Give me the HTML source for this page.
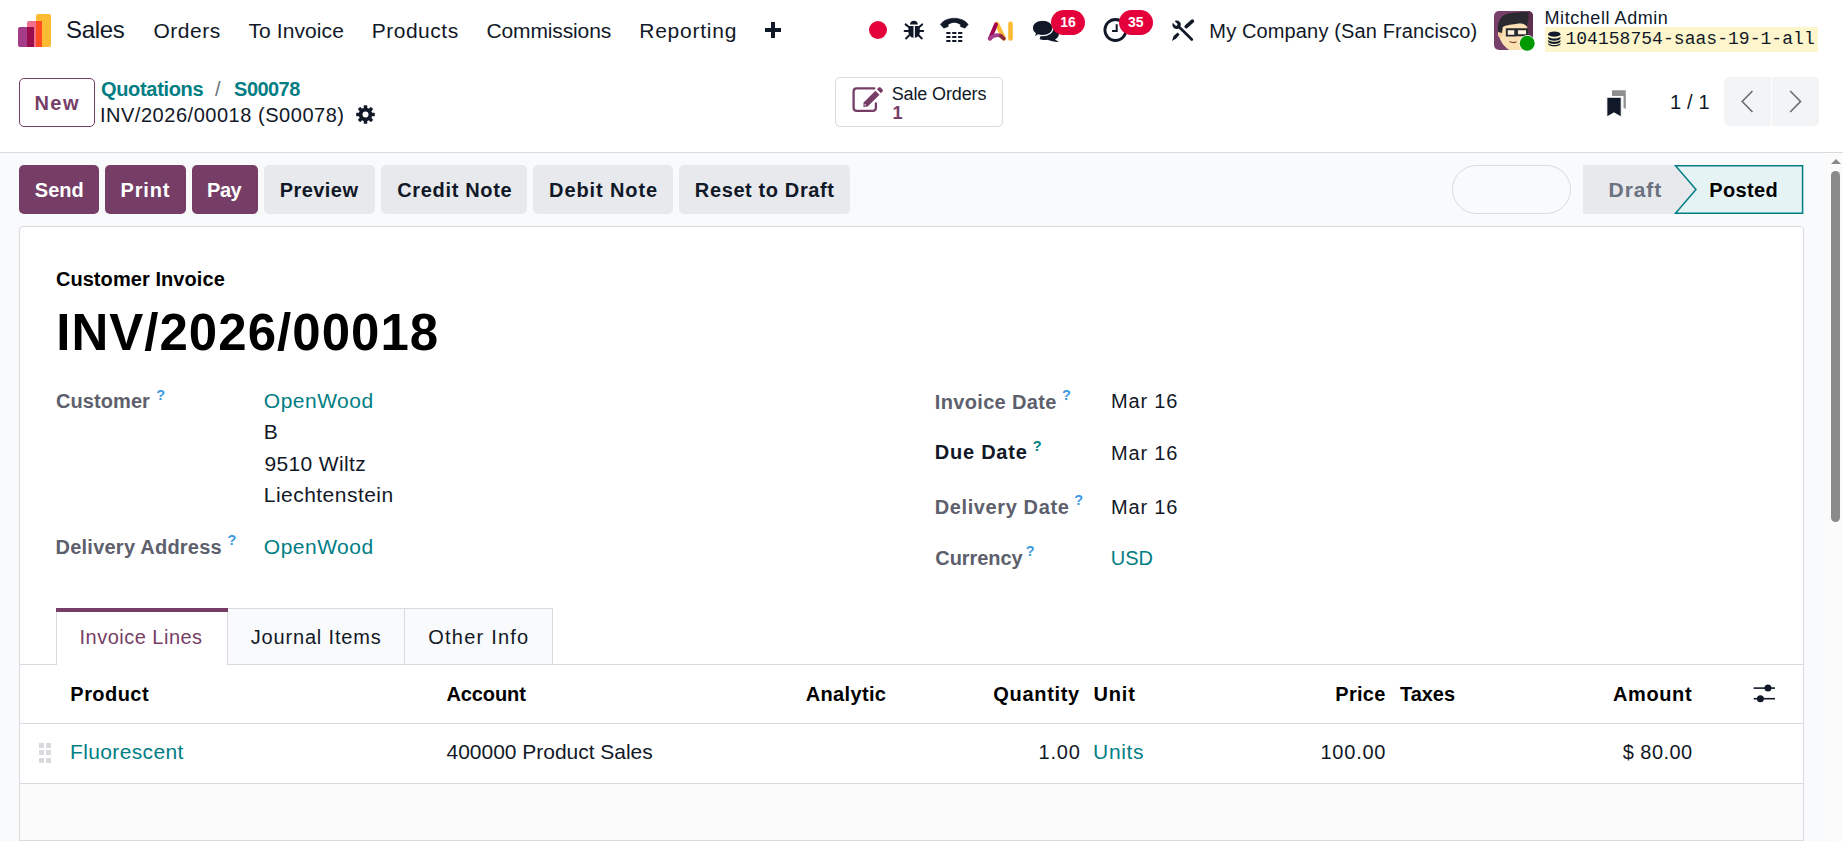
<!DOCTYPE html>
<html><head><meta charset="utf-8"><title>INV/2026/00018</title>
<style>
html,body{margin:0;padding:0;}
body{width:1843px;height:841px;overflow:hidden;position:relative;background:#fff;font-family:"Liberation Sans",sans-serif;}
.t{position:absolute;white-space:pre;}
.r{position:absolute;}
</style></head><body>
<div class="r" style="left:0px;top:0px;width:1843px;height:152px;background:#fff;"></div>
<div class="r" style="left:0px;top:152px;width:1843px;height:1px;background:#D8DADD;"></div>
<div class="r" style="left:0px;top:153px;width:1843px;height:688px;background:#F9FAFB;"></div>
<div class="r" style="left:19px;top:226px;width:1785px;height:700px;background:#fff;border:1px solid #D8DADD;border-radius:4px;box-sizing:border-box;"></div>
<svg class="r" style="left:18px;top:14px" width="34" height="34" viewBox="0 0 34 34">
<rect x="18" y="0" width="15" height="33" rx="2" fill="#FDBB33"/>
<rect x="9" y="7" width="15" height="26" rx="2" fill="#F06F8D"/>
<rect x="18" y="7" width="6" height="26" fill="#FF4B22"/>
<rect x="0" y="13" width="16" height="20" rx="2" fill="#A43C8A"/>
<rect x="9" y="13" width="7" height="20" fill="#9B0E4E"/>
</svg>
<span class="t" style="left:65.91px;top:18.38px;font-size:24px;line-height:24px;color:#111827;font-weight:400;font-family:'Liberation Sans', sans-serif;letter-spacing:-0.270px;">Sales</span>
<span class="t" style="left:153.41px;top:20.22px;font-size:21px;line-height:21px;color:#111827;font-weight:400;font-family:'Liberation Sans', sans-serif;letter-spacing:0.514px;">Orders</span>
<span class="t" style="left:248.43px;top:20.22px;font-size:21px;line-height:21px;color:#111827;font-weight:400;font-family:'Liberation Sans', sans-serif;letter-spacing:0.095px;">To Invoice</span>
<span class="t" style="left:371.68px;top:20.22px;font-size:21px;line-height:21px;color:#111827;font-weight:400;font-family:'Liberation Sans', sans-serif;letter-spacing:0.515px;">Products</span>
<span class="t" style="left:486.43px;top:20.22px;font-size:21px;line-height:21px;color:#111827;font-weight:400;font-family:'Liberation Sans', sans-serif;letter-spacing:-0.120px;">Commissions</span>
<span class="t" style="left:639.28px;top:20.22px;font-size:21px;line-height:21px;color:#111827;font-weight:400;font-family:'Liberation Sans', sans-serif;letter-spacing:0.752px;">Reporting</span>
<svg class="r" style="left:765px;top:22px" width="16" height="16" viewBox="0 0 16 16"><rect x="6" y="0" width="4" height="16" fill="#111827"/><rect x="0" y="6" width="16" height="4" fill="#111827"/></svg>
<div class="r" style="left:869px;top:21px;width:18px;height:18px;background:#E4003A;border-radius:50%;"></div>
<span class="t" style="left:1209.36px;top:20.67px;font-size:20px;line-height:20px;color:#111827;font-weight:400;font-family:'Liberation Sans', sans-serif;letter-spacing:0.134px;">My Company (San Francisco)</span>
<span class="t" style="left:1544.52px;top:9.36px;font-size:18px;line-height:18px;color:#111827;font-weight:400;font-family:'Liberation Sans', sans-serif;letter-spacing:0.562px;">Mitchell Admin</span>
<div class="r" style="left:1545px;top:27px;width:273px;height:25px;background:#FDF6CC;"></div>
<span class="t" style="left:1565.40px;top:30.06px;font-size:18px;line-height:18px;color:#111827;font-weight:400;font-family:'Liberation Mono', monospace;letter-spacing:0.039px;">104158754-saas-19-1-all</span>
<div class="r" style="left:19px;top:78px;width:76px;height:49px;border:1px solid #763E66;border-radius:5px;box-sizing:border-box;"></div>
<span class="t" style="left:34.46px;top:92.87px;font-size:20px;line-height:20px;color:#763E66;font-weight:700;font-family:'Liberation Sans', sans-serif;letter-spacing:1.438px;">New</span>
<span class="t" style="left:100.98px;top:78.87px;font-size:20px;line-height:20px;color:#017E84;font-weight:700;font-family:'Liberation Sans', sans-serif;letter-spacing:-0.323px;">Quotations</span>
<span class="t" style="left:215.00px;top:78.87px;font-size:20px;line-height:20px;color:#6B7280;font-weight:400;font-family:'Liberation Sans', sans-serif;">/</span>
<span class="t" style="left:234.12px;top:78.87px;font-size:20px;line-height:20px;color:#017E84;font-weight:700;font-family:'Liberation Sans', sans-serif;letter-spacing:-0.553px;">S00078</span>
<span class="t" style="left:99.95px;top:104.57px;font-size:20px;line-height:20px;color:#111827;font-weight:400;font-family:'Liberation Sans', sans-serif;letter-spacing:0.531px;">INV/2026/00018 (S00078)</span>
<div class="r" style="left:835px;top:77px;width:168px;height:50px;border:1px solid #D8DADD;border-radius:5px;box-sizing:border-box;background:#fff;"></div>
<span class="t" style="left:891.68px;top:84.66px;font-size:18px;line-height:18px;color:#111827;font-weight:400;font-family:'Liberation Sans', sans-serif;letter-spacing:-0.127px;">Sale Orders</span>
<span class="t" style="left:892.47px;top:104.46px;font-size:18px;line-height:18px;color:#763E66;font-weight:700;font-family:'Liberation Sans', sans-serif;">1</span>
<span class="t" style="left:1669.88px;top:91.87px;font-size:20px;line-height:20px;color:#111827;font-weight:400;font-family:'Liberation Sans', sans-serif;letter-spacing:0.221px;">1 / 1</span>
<div class="r" style="left:1724px;top:77px;width:95px;height:49px;background:#F3F4F6;border-radius:5px;"></div>
<div class="r" style="left:1771px;top:77px;width:1px;height:49px;background:#fff;"></div>
<div class="r" style="left:19px;top:165px;width:80px;height:49px;background:#763E66;border-radius:5px;"></div>
<span class="t" style="left:34.82px;top:180.07px;font-size:20px;line-height:20px;color:#fff;font-weight:700;font-family:'Liberation Sans', sans-serif;">Send</span>
<div class="r" style="left:105px;top:165px;width:81px;height:49px;background:#763E66;border-radius:5px;"></div>
<span class="t" style="left:120.46px;top:180.07px;font-size:20px;line-height:20px;color:#fff;font-weight:700;font-family:'Liberation Sans', sans-serif;letter-spacing:0.856px;">Print</span>
<div class="r" style="left:192px;top:165px;width:66px;height:49px;background:#763E66;border-radius:5px;"></div>
<span class="t" style="left:207.06px;top:180.07px;font-size:20px;line-height:20px;color:#fff;font-weight:700;font-family:'Liberation Sans', sans-serif;letter-spacing:-0.471px;">Pay</span>
<div class="r" style="left:264px;top:165px;width:111px;height:49px;background:#E7E9ED;border-radius:5px;"></div>
<span class="t" style="left:279.66px;top:180.07px;font-size:20px;line-height:20px;color:#111827;font-weight:700;font-family:'Liberation Sans', sans-serif;letter-spacing:0.449px;">Preview</span>
<div class="r" style="left:381px;top:165px;width:146px;height:49px;background:#E7E9ED;border-radius:5px;"></div>
<span class="t" style="left:397.18px;top:180.07px;font-size:20px;line-height:20px;color:#111827;font-weight:700;font-family:'Liberation Sans', sans-serif;letter-spacing:0.672px;">Credit Note</span>
<div class="r" style="left:533px;top:165px;width:140px;height:49px;background:#E7E9ED;border-radius:5px;"></div>
<span class="t" style="left:549.06px;top:180.07px;font-size:20px;line-height:20px;color:#111827;font-weight:700;font-family:'Liberation Sans', sans-serif;letter-spacing:0.891px;">Debit Note</span>
<div class="r" style="left:679px;top:165px;width:171px;height:49px;background:#E7E9ED;border-radius:5px;"></div>
<span class="t" style="left:694.86px;top:180.07px;font-size:20px;line-height:20px;color:#111827;font-weight:700;font-family:'Liberation Sans', sans-serif;letter-spacing:0.611px;">Reset to Draft</span>
<div class="r" style="left:1452px;top:165px;width:119px;height:49px;border:1px solid #D8DADD;border-radius:25px;box-sizing:border-box;"></div>
<svg class="r" style="left:1583px;top:165px" width="222" height="49" viewBox="0 0 222 49">
<path d="M0 0 H92 L113 24.5 L92 49 H0 Z" fill="#E7E9ED"/>
<path d="M92.5 0.7 H219.6 V48.3 H92.5 L113 24.5 Z" fill="#E6F3F4" stroke="#017E84" stroke-width="1.5" stroke-linejoin="miter"/>
</svg>
<span class="t" style="left:1608.60px;top:178.72px;font-size:21px;line-height:21px;color:#6B7280;font-weight:700;font-family:'Liberation Sans', sans-serif;letter-spacing:0.914px;">Draft</span>
<span class="t" style="left:1709.16px;top:179.57px;font-size:20px;line-height:20px;color:#000;font-weight:700;font-family:'Liberation Sans', sans-serif;letter-spacing:0.395px;">Posted</span>
<span class="t" style="left:55.88px;top:268.87px;font-size:20px;line-height:20px;color:#000;font-weight:700;font-family:'Liberation Sans', sans-serif;letter-spacing:0.072px;">Customer Invoice</span>
<span class="t" style="left:56.19px;top:306.82px;font-size:51px;line-height:51px;color:#000;font-weight:700;font-family:'Liberation Sans', sans-serif;letter-spacing:1.027px;">INV/2026/00018</span>
<span class="t" style="left:56.08px;top:391.27px;font-size:20px;line-height:20px;color:#5E5F6D;font-weight:700;font-family:'Liberation Sans', sans-serif;letter-spacing:0.067px;">Customer</span>
<span class="t" style="left:156.33px;top:387.62px;font-size:14.5px;line-height:14.5px;color:#3B9AE1;font-weight:700;font-family:'Liberation Sans', sans-serif;">?</span>
<span class="t" style="left:263.81px;top:390.42px;font-size:21px;line-height:21px;color:#017E84;font-weight:400;font-family:'Liberation Sans', sans-serif;letter-spacing:0.499px;">OpenWood</span>
<span class="t" style="left:263.78px;top:421.42px;font-size:21px;line-height:21px;color:#111827;font-weight:400;font-family:'Liberation Sans', sans-serif;">B</span>
<span class="t" style="left:264.52px;top:452.62px;font-size:21px;line-height:21px;color:#111827;font-weight:400;font-family:'Liberation Sans', sans-serif;letter-spacing:0.355px;">9510 Wiltz</span>
<span class="t" style="left:263.78px;top:484.22px;font-size:21px;line-height:21px;color:#111827;font-weight:400;font-family:'Liberation Sans', sans-serif;letter-spacing:0.469px;">Liechtenstein</span>
<span class="t" style="left:55.56px;top:537.07px;font-size:20px;line-height:20px;color:#5E5F6D;font-weight:700;font-family:'Liberation Sans', sans-serif;letter-spacing:0.232px;">Delivery Address</span>
<span class="t" style="left:227.53px;top:533.42px;font-size:14.5px;line-height:14.5px;color:#3B9AE1;font-weight:700;font-family:'Liberation Sans', sans-serif;">?</span>
<span class="t" style="left:263.81px;top:536.22px;font-size:21px;line-height:21px;color:#017E84;font-weight:400;font-family:'Liberation Sans', sans-serif;letter-spacing:0.499px;">OpenWood</span>
<span class="t" style="left:934.76px;top:391.57px;font-size:20px;line-height:20px;color:#5E5F6D;font-weight:700;font-family:'Liberation Sans', sans-serif;letter-spacing:0.345px;">Invoice Date</span>
<span class="t" style="left:1062.03px;top:387.72px;font-size:14.5px;line-height:14.5px;color:#3B9AE1;font-weight:700;font-family:'Liberation Sans', sans-serif;">?</span>
<span class="t" style="left:1110.96px;top:390.97px;font-size:20px;line-height:20px;color:#111827;font-weight:400;font-family:'Liberation Sans', sans-serif;letter-spacing:0.854px;">Mar 16</span>
<span class="t" style="left:934.76px;top:442.07px;font-size:20px;line-height:20px;color:#111827;font-weight:700;font-family:'Liberation Sans', sans-serif;letter-spacing:0.761px;">Due Date</span>
<span class="t" style="left:1032.73px;top:438.72px;font-size:14.5px;line-height:14.5px;color:#017E84;font-weight:700;font-family:'Liberation Sans', sans-serif;">?</span>
<span class="t" style="left:1110.96px;top:443.07px;font-size:20px;line-height:20px;color:#111827;font-weight:400;font-family:'Liberation Sans', sans-serif;letter-spacing:0.854px;">Mar 16</span>
<span class="t" style="left:934.76px;top:496.97px;font-size:20px;line-height:20px;color:#5E5F6D;font-weight:700;font-family:'Liberation Sans', sans-serif;letter-spacing:0.607px;">Delivery Date</span>
<span class="t" style="left:1074.13px;top:493.22px;font-size:14.5px;line-height:14.5px;color:#3B9AE1;font-weight:700;font-family:'Liberation Sans', sans-serif;">?</span>
<span class="t" style="left:1110.96px;top:496.77px;font-size:20px;line-height:20px;color:#111827;font-weight:400;font-family:'Liberation Sans', sans-serif;letter-spacing:0.854px;">Mar 16</span>
<span class="t" style="left:935.28px;top:547.97px;font-size:20px;line-height:20px;color:#5E5F6D;font-weight:700;font-family:'Liberation Sans', sans-serif;letter-spacing:-0.069px;">Currency</span>
<span class="t" style="left:1025.83px;top:544.22px;font-size:14.5px;line-height:14.5px;color:#3B9AE1;font-weight:700;font-family:'Liberation Sans', sans-serif;">?</span>
<span class="t" style="left:1110.86px;top:547.97px;font-size:20px;line-height:20px;color:#017E84;font-weight:400;font-family:'Liberation Sans', sans-serif;letter-spacing:-0.114px;">USD</span>
<div class="r" style="left:227px;top:608px;width:326px;height:56px;background:#F9FAFB;border:1px solid #D8DADD;border-bottom:none;box-sizing:border-box;"></div>
<div class="r" style="left:404px;top:608px;width:1px;height:56px;background:#D8DADD;"></div>
<div class="r" style="left:56px;top:608px;width:172px;height:57px;background:#fff;border-left:1px solid #D8DADD;border-right:1px solid #D8DADD;box-sizing:border-box;"></div>
<div class="r" style="left:56px;top:608px;width:172px;height:4px;background:#763E66;"></div>
<div class="r" style="left:20px;top:664px;width:36px;height:1px;background:#D8DADD;"></div>
<div class="r" style="left:228px;top:664px;width:1575px;height:1px;background:#D8DADD;"></div>
<span class="t" style="left:79.55px;top:626.67px;font-size:20px;line-height:20px;color:#763E66;font-weight:400;font-family:'Liberation Sans', sans-serif;letter-spacing:0.486px;">Invoice Lines</span>
<span class="t" style="left:250.69px;top:626.67px;font-size:20px;line-height:20px;color:#111827;font-weight:400;font-family:'Liberation Sans', sans-serif;letter-spacing:0.832px;">Journal Items</span>
<span class="t" style="left:428.35px;top:626.67px;font-size:20px;line-height:20px;color:#111827;font-weight:400;font-family:'Liberation Sans', sans-serif;letter-spacing:1.206px;">Other Info</span>
<span class="t" style="left:70.36px;top:684.47px;font-size:20px;line-height:20px;color:#000;font-weight:700;font-family:'Liberation Sans', sans-serif;letter-spacing:0.437px;">Product</span>
<span class="t" style="left:446.50px;top:684.47px;font-size:20px;line-height:20px;color:#000;font-weight:700;font-family:'Liberation Sans', sans-serif;letter-spacing:-0.110px;">Account</span>
<span class="t" style="left:805.80px;top:684.47px;font-size:20px;line-height:20px;color:#000;font-weight:700;font-family:'Liberation Sans', sans-serif;letter-spacing:0.326px;">Analytic</span>
<span class="t" style="left:993.28px;top:684.47px;font-size:20px;line-height:20px;color:#000;font-weight:700;font-family:'Liberation Sans', sans-serif;letter-spacing:0.687px;">Quantity</span>
<span class="t" style="left:1093.50px;top:684.47px;font-size:20px;line-height:20px;color:#000;font-weight:700;font-family:'Liberation Sans', sans-serif;letter-spacing:0.856px;">Unit</span>
<span class="t" style="left:1335.36px;top:684.47px;font-size:20px;line-height:20px;color:#000;font-weight:700;font-family:'Liberation Sans', sans-serif;letter-spacing:0.274px;">Price</span>
<span class="t" style="left:1399.98px;top:684.47px;font-size:20px;line-height:20px;color:#000;font-weight:700;font-family:'Liberation Sans', sans-serif;letter-spacing:-0.045px;">Taxes</span>
<span class="t" style="left:1612.90px;top:684.47px;font-size:20px;line-height:20px;color:#000;font-weight:700;font-family:'Liberation Sans', sans-serif;letter-spacing:0.641px;">Amount</span>
<div class="r" style="left:20px;top:723px;width:1783px;height:1px;background:#D8DADD;"></div>
<span class="t" style="left:69.98px;top:741.22px;font-size:21px;line-height:21px;color:#017E84;font-weight:400;font-family:'Liberation Sans', sans-serif;letter-spacing:0.366px;">Fluorescent</span>
<span class="t" style="left:446.52px;top:741.22px;font-size:21px;line-height:21px;color:#111827;font-weight:400;font-family:'Liberation Sans', sans-serif;letter-spacing:-0.022px;">400000 Product Sales</span>
<span class="t" style="left:1038.58px;top:742.07px;font-size:20px;line-height:20px;color:#111827;font-weight:400;font-family:'Liberation Sans', sans-serif;letter-spacing:0.793px;">1.00</span>
<span class="t" style="left:1093.08px;top:741.22px;font-size:21px;line-height:21px;color:#017E84;font-weight:400;font-family:'Liberation Sans', sans-serif;letter-spacing:0.633px;">Units</span>
<span class="t" style="left:1320.48px;top:742.07px;font-size:20px;line-height:20px;color:#111827;font-weight:400;font-family:'Liberation Sans', sans-serif;letter-spacing:0.766px;">100.00</span>
<span class="t" style="left:1622.79px;top:742.07px;font-size:20px;line-height:20px;color:#111827;font-weight:400;font-family:'Liberation Sans', sans-serif;letter-spacing:0.444px;">$ 80.00</span>
<div class="r" style="left:20px;top:783px;width:1783px;height:1px;background:#D8DADD;"></div>
<div class="r" style="left:20px;top:784px;width:1783px;height:56px;background:#FBFBFB;"></div>
<div class="r" style="left:20px;top:840px;width:1783px;height:1px;background:#D8DADD;"></div>
<svg class="r" style="left:900px;top:14px" width="30" height="30" viewBox="0 0 30 30">
<path d="M10 10.6 A3.9 3.9 0 0 1 17.8 10.6 Z" fill="#111827"/>
<path d="M8.4 12 H13.5 V23.7 C10.5 23.5 8.4 21 8.4 18 Z" fill="#111827"/>
<path d="M14.9 12 H19.8 V18 C19.8 21 17.8 23.5 14.9 23.7 Z" fill="#111827"/>
<g stroke="#111827" stroke-width="2" stroke-linecap="round">
<line x1="5.6" y1="10.4" x2="8.8" y2="13"/><line x1="22.2" y1="10.4" x2="19.2" y2="13"/>
<line x1="4.6" y1="17.1" x2="8.6" y2="17.1"/><line x1="23.2" y1="17.1" x2="19.6" y2="17.1"/>
<line x1="6" y1="24.4" x2="9" y2="21.6"/><line x1="21.8" y1="24.4" x2="18.8" y2="21.6"/>
</g></svg>
<svg class="r" style="left:936px;top:14px" width="36" height="32" viewBox="0 0 36 32">
<path d="M4.4 10.6 C9.5 2.1 27 2.1 32.2 10.6 L28.8 14.2 L24.4 12.6 L24.4 10.4 C20.2 7.7 16.4 7.7 12.2 10.4 L12.2 12.6 L7.8 14.2 Z" fill="#111827" stroke="#111827" stroke-width="0.5" stroke-linejoin="round"/>
<g fill="#111827">
<rect x="10.3" y="18" width="4.2" height="2"/><rect x="16.2" y="18" width="4.2" height="2"/><rect x="22.1" y="18" width="4.2" height="2"/>
<rect x="10.3" y="22" width="4.2" height="2"/><rect x="16.2" y="22" width="4.2" height="2"/><rect x="22.1" y="22" width="4.2" height="2"/>
<rect x="10.3" y="26" width="4.2" height="2"/><rect x="16.2" y="26" width="4.2" height="2"/><rect x="22.1" y="26" width="4.2" height="2"/>
</g></svg>
<svg class="r" style="left:982px;top:16px" width="34" height="28" viewBox="0 0 34 28">
<line x1="14.8" y1="7.8" x2="22" y2="22.5" stroke="#FDBB33" stroke-width="4.4" stroke-linecap="round"/>
<line x1="8" y1="22.5" x2="14" y2="8.5" stroke="#A0004F" stroke-width="4" stroke-linecap="round"/>
<path d="M7.6 22.6 Q12.5 18 18.8 19.6" stroke="#A53C8C" stroke-width="3.8" fill="none" stroke-linecap="round"/>
<line x1="18.8" y1="20" x2="21.8" y2="22.6" stroke="#8E2A3E" stroke-width="3.8" stroke-linecap="round"/>
<rect x="26.2" y="5.5" width="4.6" height="19.3" rx="2.3" fill="#FDBB33"/>
</svg>
<svg class="r" style="left:1028px;top:8px" width="34" height="38" viewBox="0 0 34 38">
<path d="M16 19 C24 17 31 20 31 25.5 C31 28.5 29 30.5 27 31.5 L31 34 C26 34 22 33 19.5 31.8 C16.5 32.3 13.5 31.8 11.5 31 Z" fill="#111827"/>
<path d="M14.6 12.2 C20.5 12.2 24.9 15.4 24.9 19.9 C24.9 24.4 20.5 27.6 14.6 27.6 C12.9 27.6 11.4 27.4 10.1 26.9 L5.9 29.6 L7.3 25.6 C5.3 24.2 4.3 22.2 4.3 19.9 C4.3 15.4 8.7 12.2 14.6 12.2 Z" fill="#111827" stroke="#fff" stroke-width="1.2"/>
</svg>
<div class="r" style="left:1051px;top:10px;width:34px;height:25px;background:#E4003A;border-radius:13px;"></div>
<span class="t" style="left:1060.32px;top:14.90px;font-size:14px;line-height:14px;color:#fff;font-weight:700;font-family:'Liberation Sans', sans-serif;">16</span>
<svg class="r" style="left:1100px;top:14px" width="30" height="32" viewBox="0 0 30 32">
<circle cx="15.4" cy="16" r="10.5" fill="none" stroke="#111827" stroke-width="2.8"/>
<path d="M16.7 10.3 V16.9 H12.1" fill="none" stroke="#111827" stroke-width="2"/>
</svg>
<div class="r" style="left:1119px;top:10px;width:34px;height:25px;background:#E4003A;border-radius:13px;"></div>
<span class="t" style="left:1128.08px;top:15.15px;font-size:14px;line-height:14px;color:#fff;font-weight:700;font-family:'Liberation Sans', sans-serif;">35</span>
<svg class="r" style="left:1168px;top:16px" width="30" height="30" viewBox="0 0 30 30">
<path d="M8.6 8.8 L15.8 15.5 L23.8 23.5" stroke="#111827" stroke-width="2.7" stroke-linecap="round" fill="none"/>
<circle cx="8.6" cy="8.8" r="4.2" fill="#111827"/>
<path d="M8.6 8.8 L5.2 5.4" stroke="#fff" stroke-width="2.6" stroke-linecap="butt"/>
<circle cx="8.6" cy="8.8" r="0.9" fill="#fff"/>
<line x1="24.4" y1="5.2" x2="18.2" y2="10.6" stroke="#111827" stroke-width="3.6" stroke-linecap="round"/>
<path d="M4 25 L5.6 20 L9.6 16.4 L11.6 18.4 L8.2 22.4 Z" fill="#111827"/>
</svg>
<svg class="r" style="left:1494px;top:11px" width="42" height="42" viewBox="0 0 42 42">
<defs><clipPath id="av"><rect x="0" y="0" width="39" height="39" rx="5"/></clipPath></defs>
<g clip-path="url(#av)">
<rect x="0" y="0" width="39" height="39" fill="#76406A"/>
<rect x="33" y="0" width="6" height="39" fill="#5E2F4E"/>
<path d="M4.5 20 C4 27 9 36 17 40 H31 C33 34 33.5 28 33.5 22 L33 12 C27 10 13 10 7 13 Z" fill="#FBE0B4"/>
<ellipse cx="6.2" cy="23" rx="2.3" ry="3.2" fill="#F6CDA0"/>
<path d="M4.2 21 C2.5 11 7 3 16 2.2 C23 1.6 30 0.5 34.5 1.5 C35 6 34 12 33 16 C31 12.5 27 12 22 13 C16 13.5 11 14.5 8.8 16 L8 22 Z" fill="#2A2930"/>
<path d="M12.8 18.2 H21.2 V24.6 H12.8 Z M23 18.2 H33 V24.2 H23 Z" fill="#FFF3DD" stroke="#2A2930" stroke-width="1.9"/>
<line x1="21.2" y1="20" x2="23" y2="20" stroke="#2A2930" stroke-width="1.6"/>
<path d="M15.5 30.5 Q19 32.5 22.5 30.8" stroke="#7a4a30" stroke-width="1.1" fill="none"/>
</g>
<circle cx="33.2" cy="32.2" r="8.1" fill="#fff"/>
<circle cx="33.2" cy="32.2" r="7.5" fill="#009A00"/>
</svg>
<svg class="r" style="left:1548px;top:31px" width="13" height="16" viewBox="0 0 13 16">
<g fill="#111827">
<ellipse cx="6.3" cy="3.2" rx="6.1" ry="2.6"/>
<path d="M0.2 5.6 C1 7 3.5 7.6 6.3 7.6 C9.1 7.6 11.6 7 12.4 5.6 V7.6 C11.6 9 9.1 9.8 6.3 9.8 C3.5 9.8 1 9 0.2 7.6 Z"/>
<path d="M0.2 8.8 C1 10.2 3.5 10.8 6.3 10.8 C9.1 10.8 11.6 10.2 12.4 8.8 V10.8 C11.6 12.2 9.1 13 6.3 13 C3.5 13 1 12.2 0.2 10.8 Z"/>
<path d="M0.2 12 C1 13.4 3.5 14 6.3 14 C9.1 14 11.6 13.4 12.4 12 V13.2 C11.6 14.6 9.1 15.2 6.3 15.2 C3.5 15.2 1 14.6 0.2 13.2 Z"/>
</g></svg>
<svg class="r" style="left:356px;top:105px" width="19" height="19" viewBox="0 0 18.4 18.4">
<mask id="gm"><rect width="18.4" height="18.4" fill="#fff"/><circle cx="9.2" cy="9.2" r="2.9" fill="#000"/></mask>
<g fill="#111827" mask="url(#gm)"><circle cx="9.2" cy="9.2" r="6.6"/><rect x="7.5" y="0.2" width="3.4" height="5" rx="0.6" transform="rotate(0 9.2 9.2)"/><rect x="7.5" y="0.2" width="3.4" height="5" rx="0.6" transform="rotate(45 9.2 9.2)"/><rect x="7.5" y="0.2" width="3.4" height="5" rx="0.6" transform="rotate(90 9.2 9.2)"/><rect x="7.5" y="0.2" width="3.4" height="5" rx="0.6" transform="rotate(135 9.2 9.2)"/><rect x="7.5" y="0.2" width="3.4" height="5" rx="0.6" transform="rotate(180 9.2 9.2)"/><rect x="7.5" y="0.2" width="3.4" height="5" rx="0.6" transform="rotate(225 9.2 9.2)"/><rect x="7.5" y="0.2" width="3.4" height="5" rx="0.6" transform="rotate(270 9.2 9.2)"/><rect x="7.5" y="0.2" width="3.4" height="5" rx="0.6" transform="rotate(315 9.2 9.2)"/></g>
</svg>
<svg class="r" style="left:848px;top:82px" width="40" height="34" viewBox="0 0 40 34">
<path d="M26.3 6.4 H8.6 C6.4 6.4 5.6 7.3 5.6 9.4 V25.8 C5.6 28 6.4 28.8 8.6 28.8 H24.9 C27.1 28.8 27.9 28 27.9 25.8 V21.3" fill="none" stroke="#763E66" stroke-width="2.3" stroke-linecap="round"/>
<path d="M15.4 25 L15.6 20.5 L27.4 8.7 L31.5 12.8 L19.7 24.6 Z" fill="#763E66"/>
<path d="M28.9 7.3 L30.6 5.6 C31.2 5 32 5 32.6 5.6 L34.5 7.5 C35.1 8.1 35.1 8.9 34.5 9.5 L32.9 11.2 Z" fill="#763E66"/>
<path d="M16.8 22.3 L17.4 23.6" stroke="#fff" stroke-width="1.1"/>
</svg>
<svg class="r" style="left:1604px;top:88px" width="24" height="32" viewBox="0 0 24 32">
<path d="M8 2.2 H21.8 V21 L19.5 19.8 V8 H8 Z" fill="#8F8F8F"/>
<path d="M2.9 9.3 H17.2 V28.9 L10 24.8 L2.9 28.9 Z" fill="#111827" stroke="#fff" stroke-width="0.9"/>
</svg>
<svg class="r" style="left:1724px;top:77px" width="95" height="49" viewBox="0 0 95 49">
<path d="M28.5 14 L18.2 24.5 L28.5 35" stroke="#6B6B6F" stroke-width="1.6" fill="none"/>
<path d="M66.2 14 L76.5 24.5 L66.2 35" stroke="#6B6B6F" stroke-width="1.6" fill="none"/>
</svg>
<svg class="r" style="left:1748px;top:678px" width="34" height="32" viewBox="0 0 34 32">
<g stroke="#111827" stroke-width="1.6"><line x1="5.6" y1="10.1" x2="27" y2="10.1"/><line x1="5.6" y1="20.7" x2="27" y2="20.7"/></g>
<circle cx="20" cy="10.1" r="3.5" fill="#111827"/><circle cx="12.4" cy="20.7" r="3.5" fill="#111827"/>
</svg>
<div class="r" style="left:39px;top:743px;width:4.6px;height:4.6px;background:#D8DADD;"></div>
<div class="r" style="left:39px;top:750.1px;width:4.6px;height:4.6px;background:#D8DADD;"></div>
<div class="r" style="left:39px;top:758px;width:4.6px;height:4.6px;background:#D8DADD;"></div>
<div class="r" style="left:46.3px;top:743px;width:4.6px;height:4.6px;background:#D8DADD;"></div>
<div class="r" style="left:46.3px;top:750.1px;width:4.6px;height:4.6px;background:#D8DADD;"></div>
<div class="r" style="left:46.3px;top:758px;width:4.6px;height:4.6px;background:#D8DADD;"></div>
<div class="r" style="left:1828px;top:153px;width:15px;height:688px;background:#FBFBFB;"></div>
<div class="r" style="left:1831px;top:171px;width:9px;height:351px;background:#8A8A8A;border-radius:5px;"></div>
<svg class="r" style="left:1831px;top:158px" width="10" height="7" viewBox="0 0 10 7"><path d="M0 6 L5 1 L10 6 Z" fill="#8A8A8A"/></svg>
</body></html>
